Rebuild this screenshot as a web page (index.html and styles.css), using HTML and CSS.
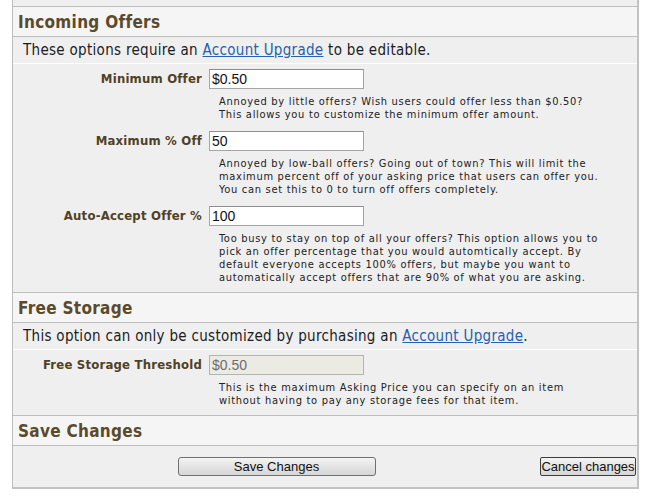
FILE: index.html
```html
<!DOCTYPE html>
<html>
<head>
<meta charset="utf-8">
<link rel="stylesheet" href="styles.css">
</head>
<body>
<div class="panel">
  <div class="top-strip"></div>

  <section class="group">
    <h2 class="group-title">Incoming Offers</h2>
    <p class="notice">These options require an <a href="#">Account Upgrade</a> to be editable.</p>
    <div class="fields">
      <div class="field">
        <label class="field-label">Minimum Offer</label>
        <div class="field-body">
          <input class="field-input" type="text" value="$0.50">
          <p class="field-help">Annoyed by little offers? Wish users could offer less than $0.50? This allows you to customize the minimum offer amount.</p>
        </div>
      </div>
      <div class="field">
        <label class="field-label">Maximum % Off</label>
        <div class="field-body">
          <input class="field-input" type="text" value="50">
          <p class="field-help">Annoyed by low-ball offers? Going out of town? This will limit the maximum percent off of your asking price that users can offer you. You can set this to 0 to turn off offers completely.</p>
        </div>
      </div>
      <div class="field">
        <label class="field-label">Auto-Accept Offer %</label>
        <div class="field-body">
          <input class="field-input" type="text" value="100">
          <p class="field-help">Too busy to stay on top of all your offers? This option allows you to pick an offer percentage that you would automtically accept. By default everyone accepts 100% offers, but maybe you want to automatically accept offers that are 90% of what you are asking.</p>
        </div>
      </div>
    </div>
  </section>

  <section class="group">
    <h2 class="group-title">Free Storage</h2>
    <p class="notice">This option can only be customized by purchasing an <a href="#">Account Upgrade</a>.</p>
    <div class="fields">
      <div class="field">
        <label class="field-label">Free Storage Threshold</label>
        <div class="field-body">
          <input class="field-input" type="text" value="$0.50" disabled>
          <p class="field-help field-help-narrow">This is the maximum Asking Price you can specify on an item without having to pay any storage fees for that item.</p>
        </div>
      </div>
    </div>
  </section>

  <section class="group group-last">
    <h2 class="group-title">Save Changes</h2>
    <div class="actions">
      <div class="action-main"><button class="btn btn-save" type="button">Save Changes</button></div>
      <button class="btn btn-cancel" type="button">Cancel changes</button>
    </div>
  </section>
</div>
</body>
</html>
```

FILE: styles.css
```css
html, body {
  margin: 0;
  padding: 0;
  background: #ffffff;
}

body {
  font-family: "DejaVu Sans Condensed", "DejaVu Sans", sans-serif;
  font-stretch: condensed;
  color: #1e1e1e;
}

.panel {
  margin-left: 12px;
  width: 624px;
  background: #efefef;
  border-left: 1px solid #bdbdbd;
  border-right: 2px solid #c2c2c2;
  border-bottom: 2px solid #c2c2c2;
}

.top-strip {
  height: 6px;
}

.group {
  border-top: 1px solid #bdbdbd;
}

.group-title {
  margin: 0;
  height: 29px;
  line-height: 30px;
  padding-left: 5px;
  background: #f5f5f5;
  border-bottom: 1px solid #bdbdbd;
  font-size: 17px;
  font-weight: bold;
  letter-spacing: 0.3px;
  color: #5b4a2b;
}

.notice {
  margin: 0;
  height: 26px;
  line-height: 27px;
  padding-left: 10px;
  font-size: 15px;
  letter-spacing: 0.3px;
  color: #1c1c24;
  border-bottom: 1px solid #ffffff;
}

.notice a {
  color: #2461b0;
  text-decoration: underline;
}

.fields {
  padding: 5px 0 8px;
  display: flex;
  flex-direction: column;
  gap: 10px;
}

.field {
  display: grid;
  grid-template-columns: 189px 1fr;
  column-gap: 7px;
  align-items: start;
}

.field-label {
  text-align: right;
  line-height: 20px;
  font-size: 13px;
  font-weight: bold;
  letter-spacing: 0.2px;
  color: #4f4126;
}

.field-body {
  display: flex;
  flex-direction: column;
  align-items: flex-start;
}

.field-input {
  box-sizing: border-box;
  width: 155px;
  height: 20px;
  margin: 0;
  padding: 0 2px;
  border: 1px solid #a5a5a5;
  border-top-color: #8e8e8e;
  background: #ffffff;
  font-family: "Liberation Sans", Arial, sans-serif;
  font-size: 14px;
  color: #111111;
}

.field-input:disabled {
  background: #ebebe4;
  color: #6d6d6d;
  border-color: #b4b4b0;
}

.field-help {
  margin: 6px 0 0 10px;
  width: 388px;
  font-size: 11px;
  line-height: 13px;
  letter-spacing: 0.7px;
  color: #222222;
}

.field-help-narrow {
  width: 362px;
}

.actions {
  display: flex;
  align-items: center;
  padding: 11px 1px 11px 0;
}

.action-main {
  flex: 1;
  display: flex;
  justify-content: center;
}

.btn {
  box-sizing: border-box;
  height: 19px;
  margin: 0;
  font-family: "Liberation Sans", Arial, sans-serif;
  font-size: 13px;
  color: #111111;
  background: linear-gradient(#f4f4f4, #e4e4e4 50%, #d6d6d6);
  border: 1px solid #707070;
  border-radius: 3px;
  padding: 0;
  line-height: 17px;
}

.btn-save {
  width: 198px;
}

.btn-cancel {
  width: 96px;
  border-color: #3c3c3c;
  border-radius: 2px;
}
```
